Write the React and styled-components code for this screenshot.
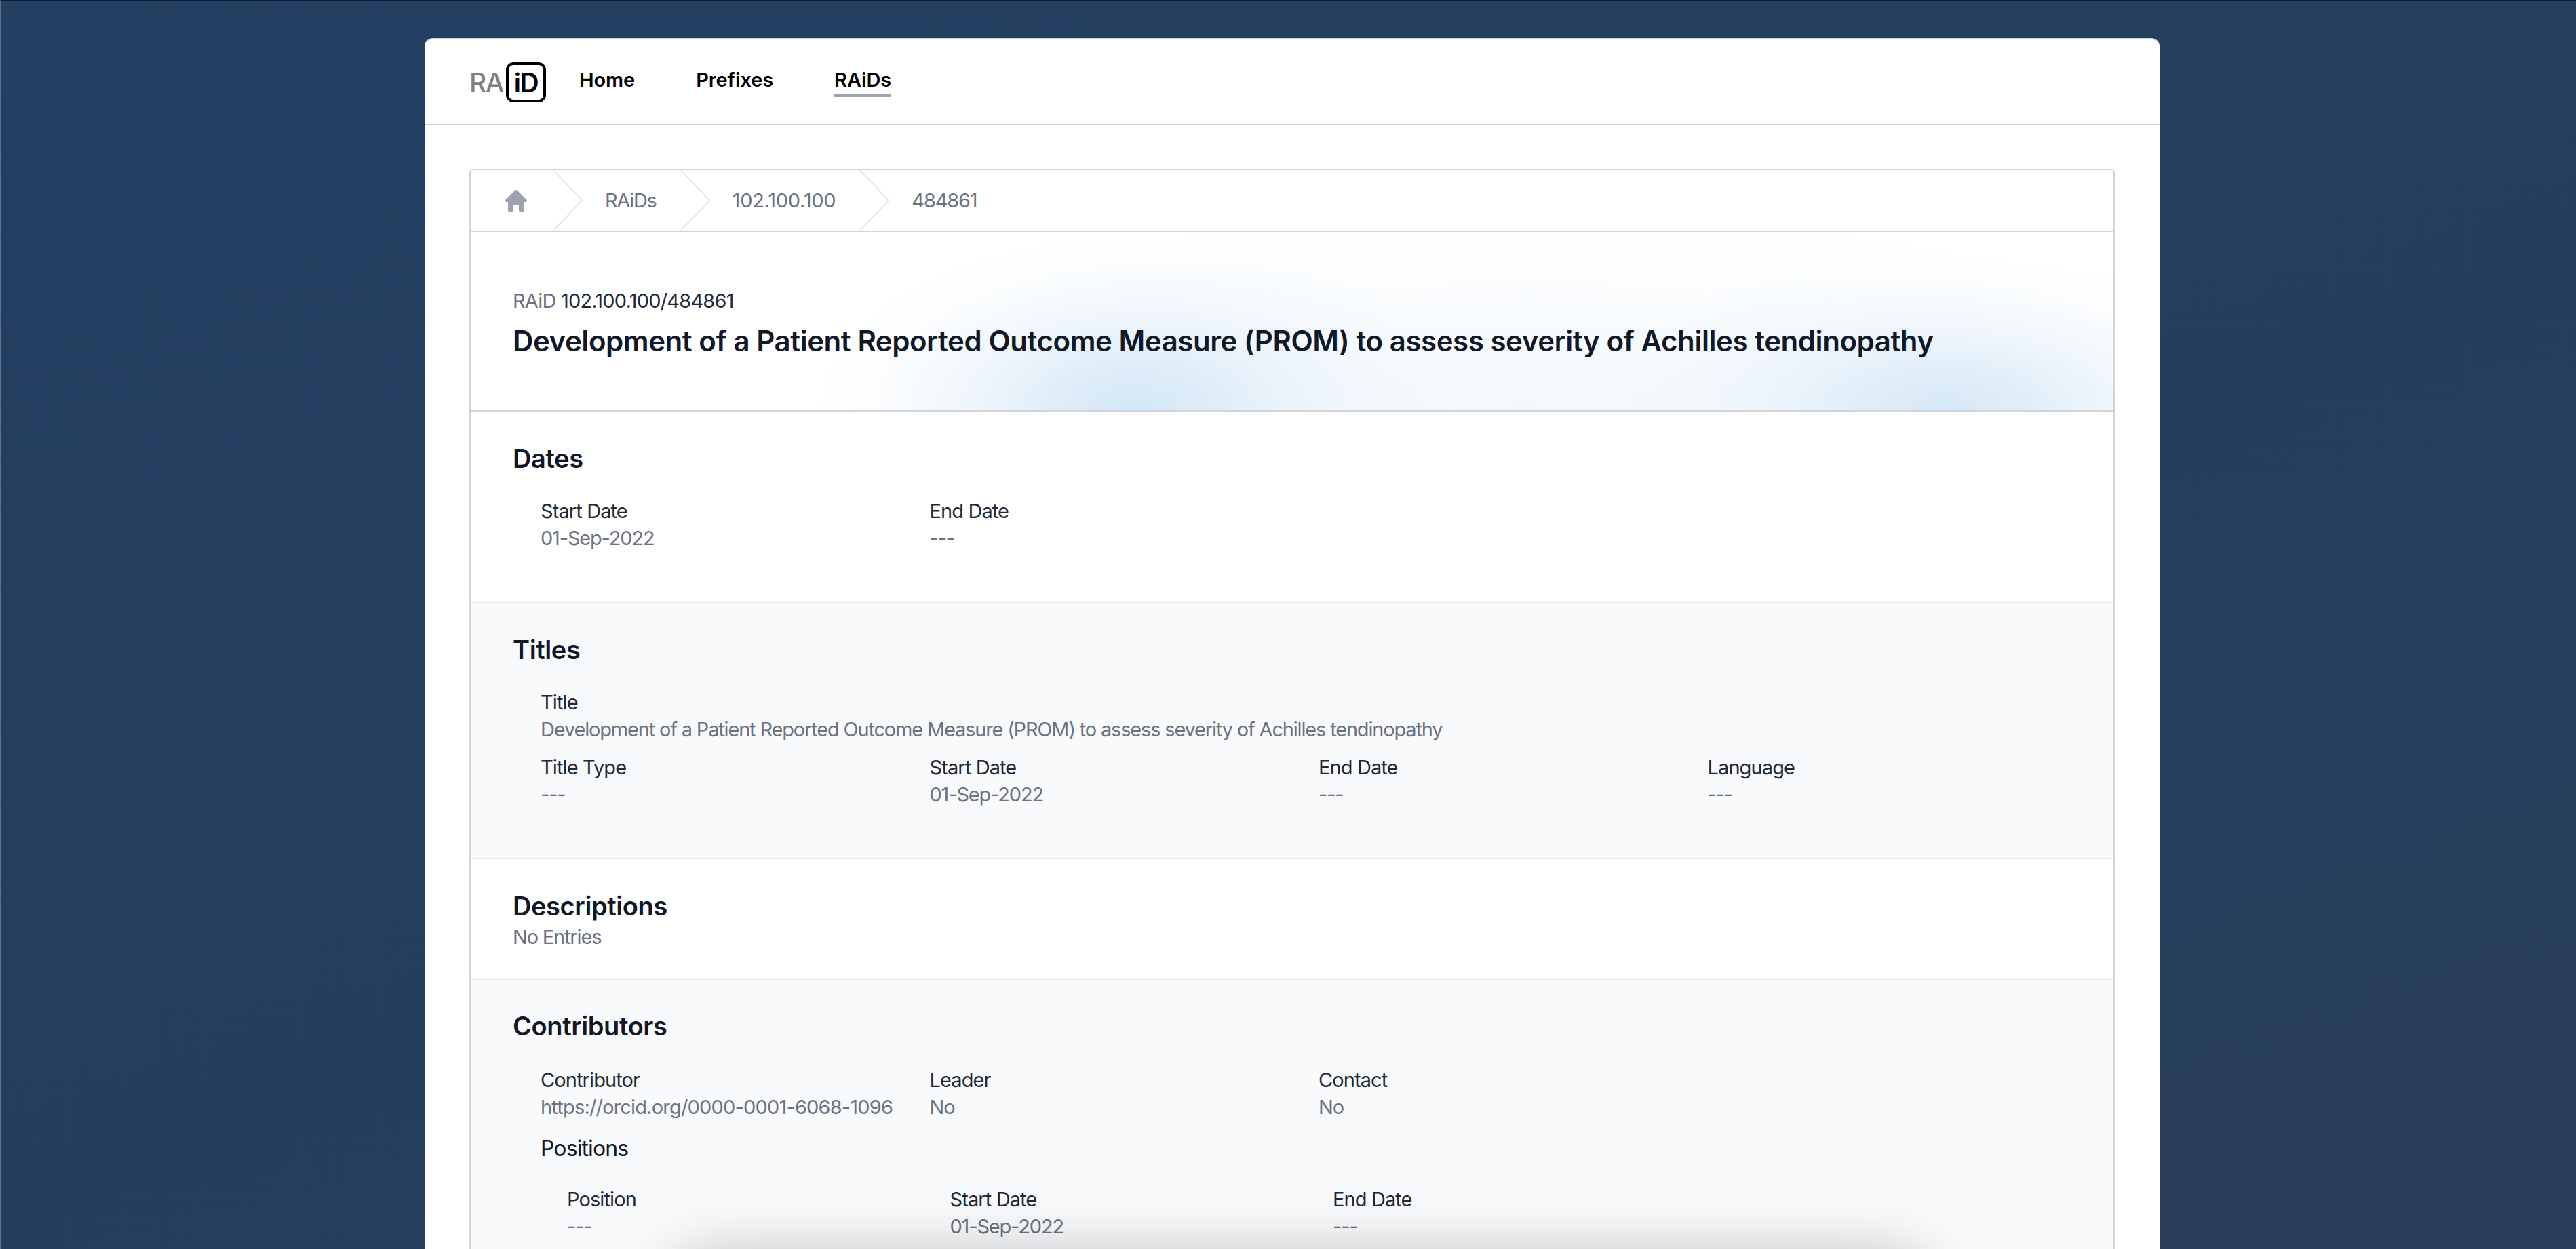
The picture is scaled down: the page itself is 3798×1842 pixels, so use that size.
import React from "react";
import styled, { createGlobalStyle } from "styled-components";

const Global = createGlobalStyle`
  html, body { margin: 0; height: 100%; overflow: hidden; background: #243e5e; }
  * { box-sizing: border-box; }
  body { font-family: Inter, "Liberation Sans", sans-serif; }
`;

const Page = styled.div`
  position: relative;
  width: 3798px;
  height: 1842px;
  overflow: hidden;
  border-top: 2px solid #101a2c;
  border-left: 2px solid #5a7290;
  background: linear-gradient(160deg, #233f61 0%, #243e5e 55%, #2a3f5a 100%);
  padding: 54px 0 0 624px;
`;

const Card = styled.main`
  width: 2558px;
  background: #fff;
  border-top: 2px solid #cbd5e1;
  border-radius: 12px 12px 0 0;
`;

const Nav = styled.nav`
  display: flex;
  align-items: flex-start;
  height: 127px;
  padding-left: 66px;
  border-bottom: 2px solid #d1d5db;
`;

const Logo = styled.div`
  display: flex;
  align-items: center;
  height: 59px;
  margin-top: 34px;
  font-size: 39px;
  font-weight: 500;
  letter-spacing: -1.5px;
  line-height: 1;
`;

const LogoGrey = styled.span`
  color: #808080;
  width: 54px;
`;

const LogoBox = styled.span`
  display: flex;
  align-items: center;
  justify-content: center;
  width: 59px;
  height: 59px;
  border: 4px solid #000;
  border-radius: 11px;
  color: #000;
  font-weight: 600;
`;

const NavLinks = styled.div`
  display: flex;
  gap: 90px;
  margin-left: 49px;
  margin-top: 40px;
`;

const NavLink = styled.a`
  display: block;
  height: 45px;
  font-size: 29px;
  line-height: 40px;
  font-weight: 600;
  letter-spacing: -0.1px;
  color: #000;
  border-bottom: ${(p) => (p.$active ? "4px solid #9ca3af" : "none")};
`;

const Content = styled.div`
  margin: 64px 66px 0;
  border: 2px solid #d1d5db;
  border-radius: 6px 6px 0 0;
  overflow: hidden;
`;

const Breadcrumb = styled.ol`
  display: flex;
  align-items: stretch;
  list-style: none;
  margin: 0;
  padding: 0 0 0 47px;
  height: 91px;
  border-bottom: 2px solid #d1d5db;
`;

const Crumb = styled.li`
  display: flex;
  align-items: center;
  font-size: 29px;
  color: #6b7280;
`;

const HomeIcon = styled.svg`
  width: 40px;
  height: 40px;
  margin-right: 34px;
  fill: #9ca3af;
`;

const CrumbChevron = styled.svg`
  width: 44px;
  height: 100%;
  fill: none;
  stroke: #e5e7eb;
  stroke-width: 2px;
  margin-right: 33px;
`;

const CrumbText = styled.span`
  margin-right: 35px;
  letter-spacing: ${(p) => p.$spacing}px;
`;

const Hero = styled.header`
  height: 266px;
  padding: 82px 62px 0;
  border-bottom: 4px solid #d1d5db;
  background:
    radial-gradient(ellipse 470px 260px at 978px 100%, rgba(212,231,246,1) 0%, rgba(212,231,246,.72) 24%, rgba(212,231,246,.36) 48%, rgba(212,231,246,.12) 72%, rgba(212,231,246,0) 100%),
    radial-gradient(ellipse 520px 230px at 2172px 100%, rgba(214,232,246,1) 0%, rgba(214,232,246,.68) 26%, rgba(214,232,246,.32) 50%, rgba(214,232,246,.1) 74%, rgba(214,232,246,0) 100%),
    radial-gradient(ellipse 1050px 300px at 1560px 100%, rgba(225,238,250,.38) 0%, rgba(225,238,250,.2) 50%, rgba(225,238,250,0) 100%),
    #fff;
`;

const HeroId = styled.div`
  font-size: 29px;
  line-height: 40px;
  color: #1f2937;
  letter-spacing: -0.8px;
`;

const HeroPrefix = styled.span`
  color: #6b7280;
`;

const HeroTitle = styled.h1`
  margin: 19px 0 0;
  font-size: 42px;
  line-height: 40px;
  font-weight: 600;
  color: #111827;
  letter-spacing: -0.44px;
  white-space: nowrap;
`;

const Section = styled.section`
  padding: ${(p) => p.$pad};
  background: ${(p) => (p.$alt ? "#f9fafb" : "#fff")};
  border-top: ${(p) => (p.$first ? "none" : "2px solid #e5e7eb")};
`;

const SectionTitle = styled.h2`
  margin: 0;
  font-size: 38px;
  line-height: 40px;
  font-weight: 600;
  color: #111827;
  letter-spacing: -0.4px;
`;

const FieldGrid = styled.div`
  display: grid;
  grid-template-columns: repeat(${(p) => p.$cols || 4}, ${(p) => p.$col || "573.5px"});
  margin-top: ${(p) => p.$top}px;
  padding-left: ${(p) => p.$left || 41}px;
`;

const Field = styled.div`
  grid-column: ${(p) => (p.$wide ? "1 / -1" : "auto")};
`;

const Label = styled.div`
  font-size: 29px;
  line-height: 40px;
  color: #1f2937;
  letter-spacing: -0.9px;
`;

const Value = styled.div`
  font-size: 29px;
  line-height: 40px;
  color: #6b7280;
  letter-spacing: ${(p) => p.$spacing ?? -1.18}px;
  white-space: nowrap;
`;

const NoEntries = styled(Value)`
  margin-top: 6px;
`;

const SubTitle = styled.h3`
  margin: 21px 0 0 41px;
  font-size: 32px;
  line-height: 40px;
  font-weight: 400;
  color: #111827;
  letter-spacing: -0.9px;
`;

const FloatingShadow = styled.div`
  position: absolute;
  left: 1020px;
  top: 1880px;
  width: 1790px;
  height: 100px;
  border-radius: 24px;
  box-shadow: 0 0 90px 30px rgba(0, 0, 0, 0.26);
  pointer-events: none;
`;

const Info = ({ label, value, wide, spacing }) => (
  <Field $wide={wide}>
    <Label>{label}</Label>
    <Value $spacing={spacing}>{value}</Value>
  </Field>
);

const crumbs = [
  { label: "RAiDs", spacing: -1.3 },
  { label: "102.100.100", spacing: -0.25 },
  { label: "484861", spacing: -1.2 },
];

export default function App() {
  return (
    <Page>
      <Global />
      <Card>
        <Nav>
          <Logo>
            <LogoGrey>RA</LogoGrey>
            <LogoBox>iD</LogoBox>
          </Logo>
          <NavLinks>
            <NavLink>Home</NavLink>
            <NavLink>Prefixes</NavLink>
            <NavLink $active>RAiDs</NavLink>
          </NavLinks>
        </Nav>
        <Content>
          <Breadcrumb>
            <Crumb>
              <HomeIcon viewBox="0 0 20 20">
                <path d="M9.293 2.293a1 1 0 011.414 0l7 7A1 1 0 0117 11h-1v6a1 1 0 01-1 1h-2a1 1 0 01-1-1v-3a1 1 0 00-1-1H9a1 1 0 00-1 1v3a1 1 0 01-1 1H5a1 1 0 01-1-1v-6H3a1 1 0 01-.707-1.707l7-7z" />
              </HomeIcon>
            </Crumb>
            {crumbs.map((c) => (
              <Crumb key={c.label}>
                <CrumbChevron viewBox="0 0 44 91" preserveAspectRatio="none">
                  <path d="M1 0 L43 45.5 L1 91" />
                </CrumbChevron>
                <CrumbText $spacing={c.spacing}>{c.label}</CrumbText>
              </Crumb>
            ))}
          </Breadcrumb>
          <Hero>
            <HeroId>
              <HeroPrefix>RAiD</HeroPrefix> 102.100.100/484861
            </HeroId>
            <HeroTitle>
              Development of a Patient Reported Outcome Measure (PROM) to assess severity of Achilles tendinopathy
            </HeroTitle>
          </Hero>
          <Section $first $pad="48px 62px 74px">
            <SectionTitle>Dates</SectionTitle>
            <FieldGrid $top={38}>
              <Info label="Start Date" value="01-Sep-2022" />
              <Info label="End Date" value="---" />
            </FieldGrid>
          </Section>
          <Section $alt $pad="48px 62px 73px">
            <SectionTitle>Titles</SectionTitle>
            <FieldGrid $top={38}>
              <Info wide label="Title" value="Development of a Patient Reported Outcome Measure (PROM) to assess severity of Achilles tendinopathy" />
            </FieldGrid>
            <FieldGrid $top={16}>
              <Info label="Title Type" value="---" />
              <Info label="Start Date" value="01-Sep-2022" />
              <Info label="End Date" value="---" />
              <Info label="Language" value="---" />
            </FieldGrid>
          </Section>
          <Section $pad="49px 62px 42px">
            <SectionTitle>Descriptions</SectionTitle>
            <NoEntries>No Entries</NoEntries>
          </Section>
          <Section $alt $pad="47px 62px 80px">
            <SectionTitle>Contributors</SectionTitle>
            <FieldGrid $top={40}>
              <Info label="Contributor" value="https://orcid.org/0000-0001-6068-1096" spacing={-0.82} />
              <Info label="Leader" value="No" />
              <Info label="Contact" value="No" />
            </FieldGrid>
            <SubTitle>Positions</SubTitle>
            <FieldGrid $top={35} $left={80} $cols={3} $col="564.5px">
              <Info label="Position" value="---" />
              <Info label="Start Date" value="01-Sep-2022" />
              <Info label="End Date" value="---" />
            </FieldGrid>
          </Section>
        </Content>
      </Card>
      <FloatingShadow />
    </Page>
  );
}
